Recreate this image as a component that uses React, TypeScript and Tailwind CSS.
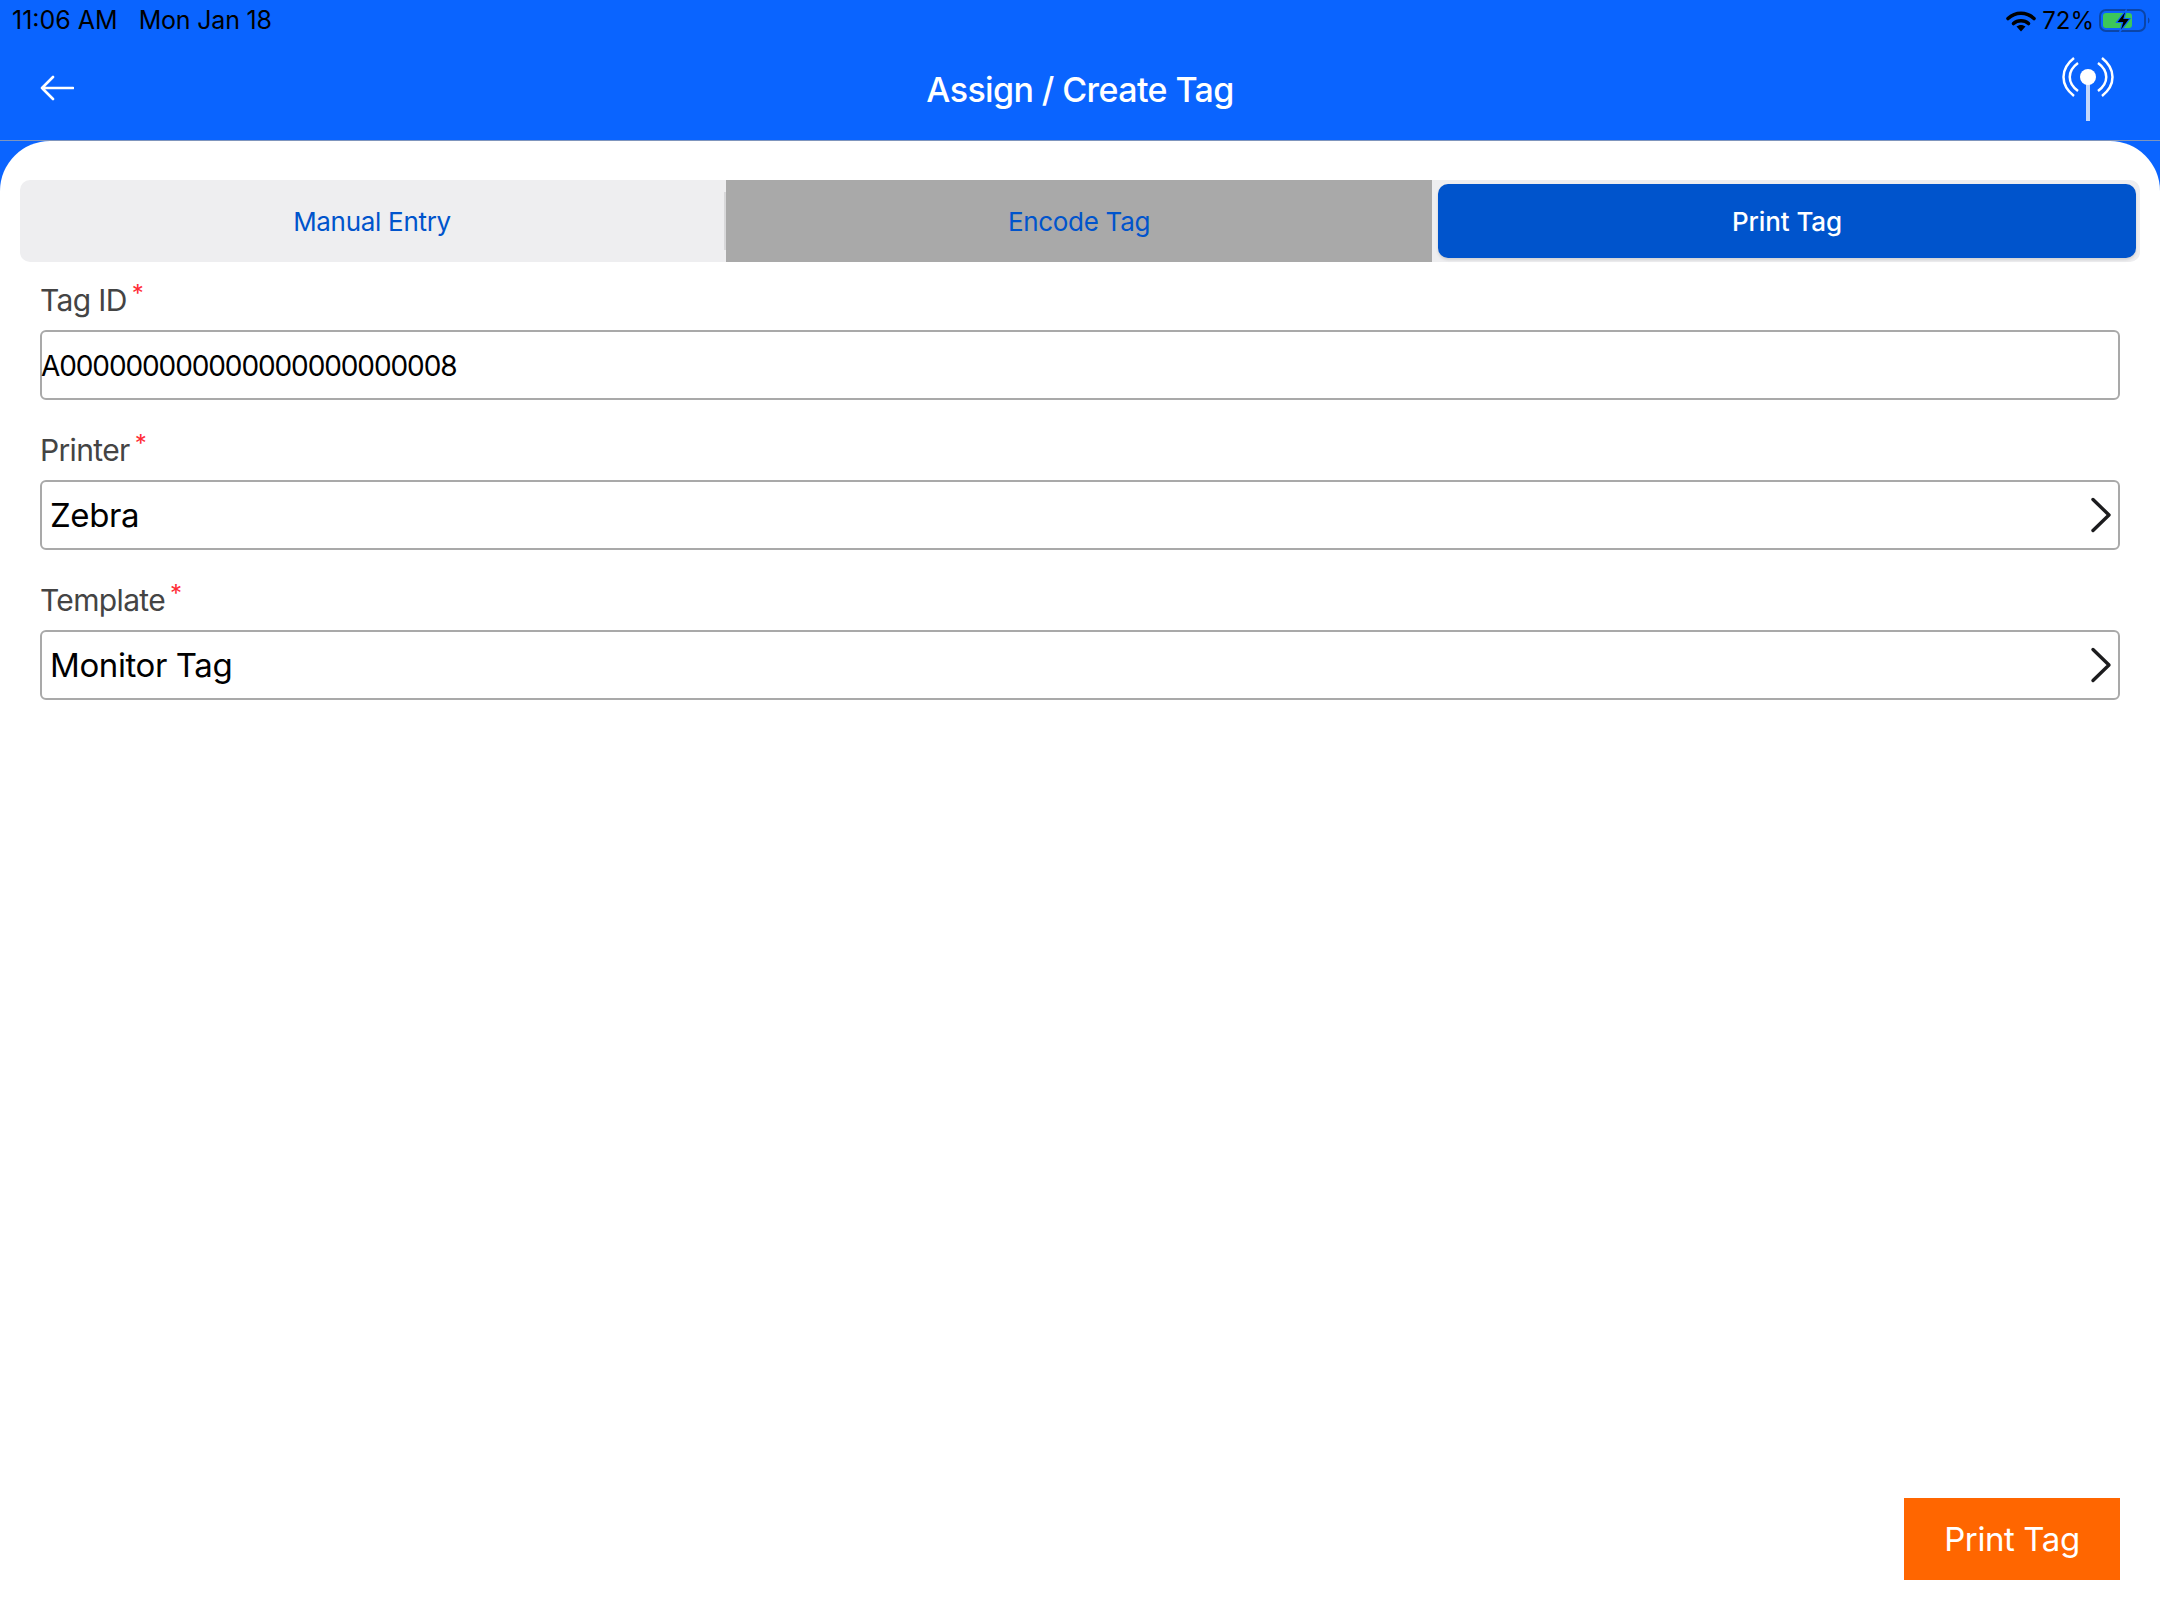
const FONT = "font-['Inter','Liberation_Sans',sans-serif]";

function WifiIcon() {
  return (
    <svg width="30" height="24" viewBox="0 0 30 24" className="mr-[6px]">
      <path d="M2 9.5C9.5 2.5 20.5 2.5 28 9.5" fill="none" stroke="#000" strokeWidth="3.6" strokeLinecap="round" />
      <path d="M7.5 14.5C11.5 10.8 18.5 10.8 22.5 14.5" fill="none" stroke="#000" strokeWidth="3.6" strokeLinecap="round" />
      <path d="M10.5 17.6C13 15.4 17 15.4 19.5 17.6L15 22.5Z" fill="#000" />
    </svg>
  );
}

function BatteryIcon() {
  return (
    <svg width="52" height="26" viewBox="0 0 52 26" className="ml-[5px]">
      <rect x="1" y="2" width="45" height="21" rx="6" fill="none" stroke="#0b45a8" strokeWidth="2" />
      <rect x="4" y="5" width="29" height="15" rx="3" fill="#3cc75a" />
      <path d="M49 9.5C51 10.5 51 14.5 49 15.5Z" fill="#0b45a8" />
      <path d="M27.5 1.5L17.5 14.5H23.5L20.5 24.5L31 10.5H25Z" fill="#000" stroke="#0a64ff" strokeWidth="1.2" />
    </svg>
  );
}

function AntennaIcon() {
  return (
    <svg width="56" height="70" viewBox="0 0 56 70">
      <path d="M28 24V68" stroke="#c3d7fb" strokeWidth="4" />
      <circle cx="28" cy="24" r="8" fill="#fff" />
      <g fill="none" stroke="#fff" strokeWidth="2.5">
        <path d="M18 10C7 18 7 30 18 38" />
        <path d="M14 5C0 16 0 32 14 43" />
        <path d="M38 10C49 18 49 30 38 38" />
        <path d="M42 5C56 16 56 32 42 43" />
      </g>
    </svg>
  );
}

function Chevron() {
  return (
    <svg width="22" height="36" viewBox="0 0 22 36" className="shrink-0">
      <path d="M3 2.5L19 18L3 33.5" fill="none" stroke="#1c1c1e" strokeWidth="3.4" strokeLinecap="round" strokeLinejoin="round" />
    </svg>
  );
}

function Field({ label, value, select }: { label: string; value: string; select?: boolean }) {
  return (
    <div className="flex flex-col">
      <div className="h-[39px] flex items-start text-[30px] leading-[39px] text-[#444444] tracking-[-0.65px]">
        {label}
        <span className="ml-[5px] text-[24px] leading-[26px] text-[#ff2d37]">*</span>
      </div>
      <div
        className={`mt-[10px] h-[70px] flex items-center justify-between border-2 border-[#a9a9a9] rounded-[6px] ${
          select ? "pl-[8px] pr-[6px] text-[33px] tracking-[-0.4px]" : "text-[28px] tracking-[-1.1px]"
        } text-black`}
      >
        <span className={select ? "pt-[1px]" : "pt-[1px] -ml-[1px]"}>{value}</span>
        {select && <Chevron />}
      </div>
    </div>
  );
}

export default function App() {
  return (
    <div className={`${FONT} w-[2160px] h-[1620px] flex flex-col bg-[#0a64ff] overflow-hidden`}>
      <header className="h-[140px] shrink-0 border-b border-[#7f95bd] box-content">
        <div className="h-[40px] pl-[12px] pr-[9px] pt-[1px] flex items-center justify-between text-black">
          <div className="flex gap-[21px] text-[25px]">
            <span>11:06 AM</span>
            <span className="tracking-[-0.2px]">Mon Jan 18</span>
          </div>
          <div className="flex items-center text-[24px]">
            <WifiIcon />
            <span>72%</span>
            <BatteryIcon />
          </div>
        </div>
        <div className="h-[100px] px-[44px] grid grid-cols-[1fr_auto_1fr] items-center">
          <svg width="34" height="26" viewBox="0 0 34 26" className="-mt-[5px] -ml-[4px]">
            <path d="M33 13H2M13 2L2 13L13 24" fill="none" stroke="#fff" strokeWidth="2.6" strokeLinecap="round" strokeLinejoin="round" />
          </svg>
          <h1 className="text-[34px] font-medium text-white tracking-[-0.6px] -mt-[2px]">Assign / Create Tag</h1>
          <div className="-mt-[5px] justify-self-end">
            <AntennaIcon />
          </div>
        </div>
      </header>

      <main className="flex-1 flex flex-col bg-white rounded-t-[50px] px-[20px] pt-[39px] pb-[40px]">
        <div className="h-[82px] shrink-0 grid grid-cols-[706px_706px_1fr] bg-[#eeeef0] rounded-[10px] text-[26px]">
          <div className="flex items-center">
            <button className="flex-1 text-[#0054cc] tracking-[-0.3px]">Manual Entry</button>
            <span className="w-[2px] h-[58px] bg-[#d8d8da]" />
          </div>
          <button className="flex items-center justify-center bg-[#a9a9a9] text-[#0054cc] tracking-[-0.3px]">Encode Tag</button>
          <div className="p-[4px] pl-[6px]">
            <button className="w-full h-full rounded-[10px] bg-[#0054cc] text-white font-medium tracking-[-0.1px] shadow-[0_2px_3px_rgba(0,0,0,0.12)]">
              Print Tag
            </button>
          </div>
        </div>

        <div className="mt-[19px] px-[20px] flex flex-col gap-[31px]">
          <Field label="Tag ID" value="A000000000000000000000008" />
          <Field label="Printer" value="Zebra" select />
          <Field label="Template" value="Monitor Tag" select />
        </div>

        <div className="mt-auto flex justify-end pr-[20px]">
          <button className="w-[216px] h-[82px] pt-[1px] bg-[#ff6600] text-white text-[33px] tracking-[-0.4px]">Print Tag</button>
        </div>
      </main>
    </div>
  );
}
